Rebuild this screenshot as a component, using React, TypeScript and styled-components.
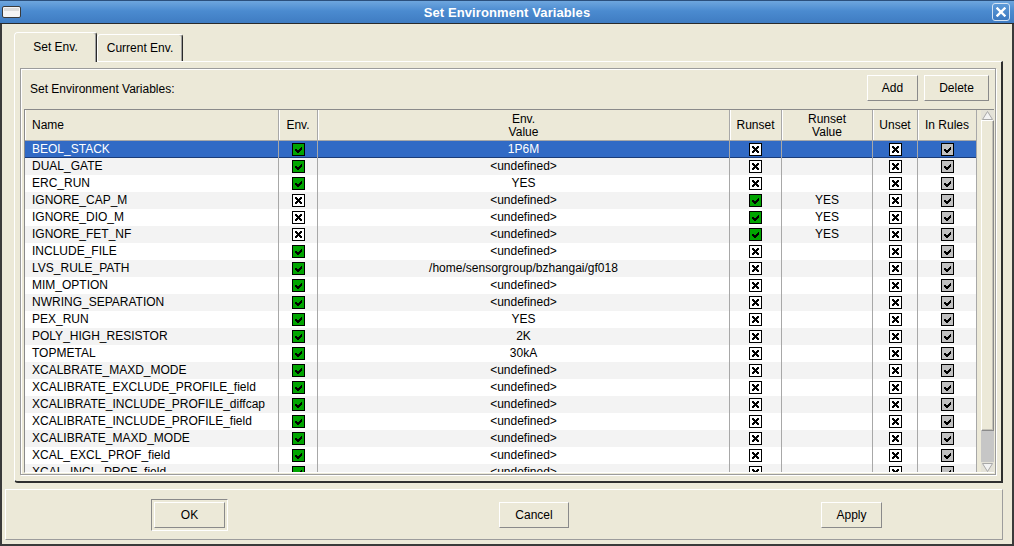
import React from 'react';
import styled, { createGlobalStyle } from 'styled-components';

const Global = createGlobalStyle`
  html, body { margin: 0; padding: 0; background: #ece9d8; }
  body { font-family: "Liberation Sans", Arial, sans-serif; font-size: 12px; color: #000; }
  * { box-sizing: border-box; }
`;

const BEIGE = '#ece9d8';

const Window = styled.div`
  width: 1014px;
  height: 546px;
  display: flex;
  flex-direction: column;
  background: ${BEIGE};
  overflow: hidden;
`;

const TitleBar = styled.div`
  height: 24px;
  display: grid;
  grid-template-columns: 1fr auto 1fr;
  align-items: center;
  background: linear-gradient(#6ea6de 0%, #4b8bd0 45%, #3f7cc2 100%);
  border-top: 1px solid #2b4f7c;
  border-bottom: 1px solid #2a2a2a;
  color: #fff;
`;

const TitleText = styled.div`
  font-weight: bold;
  font-size: 13px;
  letter-spacing: 0.1px;
`;

const TitleIcon = styled.svg`
  justify-self: start;
  margin-left: 2px;
  display: block;
`;

const CloseBtn = styled.div`
  justify-self: end;
  margin-right: 4px;
  width: 18px;
  height: 18px;
  border: 1px solid #d4e3f4;
  border-radius: 3px;
  background: linear-gradient(#5d9ad8, #3c79c0);
  display: flex;
  align-items: center;
  justify-content: center;
`;

const Frame = styled.div`
  flex: 1;
  display: flex;
  flex-direction: column;
  border-left: 2px solid #3a3a3a;
  border-right: 2px solid #3a3a3a;
  border-bottom: 2px solid #3a3a3a;
  padding: 8px 0 0 0;
`;

const TabBar = styled.div`
  display: flex;
  align-items: flex-end;
  height: 29px;
  margin-left: 12px;
  position: relative;
  z-index: 1;
`;

const Tab = styled.div<{ $active?: boolean; $w: number }>`
  width: ${p => p.$w}px;
  height: ${p => (p.$active ? 30 : 27)}px;
  margin-bottom: ${p => (p.$active ? -1 : 0)}px;
  background: ${BEIGE};
  border-top: 1px solid #fff;
  border-left: 1px solid #fff;
  border-right: 1px solid #2a2a2a;
  box-shadow: inset -1px 0 0 #a0a0a0;
  border-radius: 4px 3px 0 0;
  display: flex;
  align-items: center;
  justify-content: center;
  padding-bottom: ${p => (p.$active ? 1 : 0)}px;
  font-size: 12px;
`;

const Panel = styled.div`
  height: 422px;
  margin: 0 9px 0 12px;
  background: ${BEIGE};
  border-top: 1px solid #fff;
  border-left: 1px solid #fff;
  border-right: 2px solid #2e2e2e;
  border-bottom: 2px solid #2e2e2e;
  border-bottom-left-radius: 4px;
  padding: 6px 5px 7px 5px;
  display: flex;
  flex-direction: column;
`;

const Group = styled.div`
  flex: 1;
  border: 1px solid #9c9c9c;
  box-shadow: inset 1px 1px 0 #fff, 1px 1px 0 #fff;
  padding: 6px 1px 1px 3px;
  display: flex;
  flex-direction: column;
  gap: 8px;
`;

const GroupHeader = styled.div`
  display: flex;
  align-items: center;
  height: 26px;
  padding-right: 5px;
`;

const GroupLabel = styled.div`
  flex: 1;
  padding-left: 6px;
  padding-top: 1px;
`;

const Button = styled.button<{ $w: number; $ml?: number }>`
  width: ${p => p.$w}px;
  height: 26px;
  margin-left: ${p => p.$ml ?? 0}px;
  background: ${BEIGE};
  border-style: solid;
  border-width: 1px;
  border-color: #fff #8a8a8a #8a8a8a #fff;
  font-family: "Liberation Sans", Arial, sans-serif;
  font-size: 12px;
  color: #000;
  padding: 0;
`;

const DefaultFrame = styled.div<{ $ml?: number }>`
  margin-left: ${p => p.$ml ?? 0}px;
  padding: 2px;
  border-style: solid;
  border-width: 1px;
  border-color: #8a8a8a #fff #fff #8a8a8a;
  display: flex;
`;

const TableBox = styled.div`
  height: 364px;
  border-top: 1px solid #8a8a8a;
  border-left: 1px solid #8a8a8a;
  border-bottom: 1px solid #fff;
  display: flex;
  background: ${BEIGE};
`;

const Grid = styled.div`
  width: 952px;
  display: flex;
  flex-direction: column;
  overflow: hidden;
`;

const COLS = '254px 39px 412px 52px 91px 45px 59px';

const HeaderRow = styled.div`
  display: grid;
  grid-template-columns: ${COLS};
  height: 31px;
  flex: none;
`;

const HeaderCell = styled.div<{ $left?: boolean }>`
  background: ${BEIGE};
  border-right: 1px solid #a8a8a8;
  border-bottom: 1px solid #a8a8a8;
  box-shadow: inset 1px 0 0 #fff;
  display: flex;
  align-items: center;
  justify-content: ${p => (p.$left ? 'flex-start' : 'center')};
  text-align: center;
  padding-left: ${p => (p.$left ? 7 : 0)}px;
  padding-top: 1px;
  line-height: 13px;
`;

const Body = styled.div`
  flex: 1;
  overflow: hidden;
`;

const Row = styled.div<{ $bg: string; $sel?: boolean }>`
  display: grid;
  grid-template-columns: ${COLS};
  height: 17px;
  background: ${p => p.$bg};
  color: ${p => (p.$sel ? '#fff' : '#000')};
  box-shadow: ${p => (p.$sel ? 'inset 0 -1px 0 #1b3c78' : 'none')};
`;

const Cell = styled.div<{ $left?: boolean }>`
  border-right: 1px solid #a8a8a8;
  display: flex;
  align-items: center;
  justify-content: ${p => (p.$left ? 'flex-start' : 'center')};
  padding-left: ${p => (p.$left ? 7 : 0)}px;
  white-space: nowrap;
  overflow: hidden;
  line-height: 17px;
`;

const Filler = styled.div`
  flex: 1;
  background: ${BEIGE};
`;

const ScrollBar = styled.div`
  width: 13px;
  display: flex;
  flex-direction: column;
  background: #c8c8c8;
`;

const ScrollArrow = styled.div`
  height: 10px;
  background: #e4e2d8;
  display: flex;
  align-items: center;
  justify-content: center;
`;

const Thumb = styled.div`
  height: 311px;
  background: ${BEIGE};
  border-style: solid;
  border-width: 1px;
  border-color: #fff #8a8a8a #8a8a8a #fff;
  box-shadow: inset -1px -1px 0 #c4c2b8;
`;

const Track = styled.div`
  flex: 1;
  background: #c6c6c6;
`;

const ButtonBar = styled.div`
  height: 51px;
  margin: 6px 9px 0 3px;
  border-style: solid;
  border-width: 1px;
  border-color: #fff #9c9c9c #9c9c9c #fff;
  display: flex;
  align-items: center;
  padding-left: 145px;
`;

type Kind = 'c' | 'x' | 'g';

const Box: React.FC<{ kind: Kind }> = ({ kind }) => {
  const fill = kind === 'c' ? '#00a400' : kind === 'g' ? '#c0c0c0' : '#fff';
  return (
    <svg width="13" height="13" viewBox="0 0 13 13" shapeRendering="crispEdges" style={{ display: 'block' }}>
      <rect x="0.5" y="0.5" width="12" height="12" fill={fill} stroke="#000" strokeWidth="1" />
      {kind === 'x' ? (
        <g fill="#000">
          <rect x="3" y="3" width="2" height="2" />
          <rect x="8" y="3" width="2" height="2" />
          <rect x="4" y="4" width="2" height="2" />
          <rect x="7" y="4" width="2" height="2" />
          <rect x="5" y="5" width="3" height="3" />
          <rect x="4" y="7" width="2" height="2" />
          <rect x="7" y="7" width="2" height="2" />
          <rect x="3" y="8" width="2" height="2" />
          <rect x="8" y="8" width="2" height="2" />
        </g>
      ) : (
        <g fill="#000">
          <rect x="3" y="6" width="2" height="2" />
          <rect x="4" y="7" width="2" height="2" />
          <rect x="5" y="8" width="2" height="2" />
          <rect x="7" y="6" width="2" height="2" />
          <rect x="8" y="5" width="2" height="2" />
          <rect x="9" y="4" width="1" height="2" />
          <rect x="6" y="7" width="2" height="2" />
        </g>
      )}
    </svg>
  );
};

type RowData = { name: string; env: Kind; value: string; runset: Kind; rv: string };

const U = '<undefined>';
const rows: RowData[] = [
  { name: 'BEOL_STACK', env: 'c', value: '1P6M', runset: 'x', rv: '' },
  { name: 'DUAL_GATE', env: 'c', value: U, runset: 'x', rv: '' },
  { name: 'ERC_RUN', env: 'c', value: 'YES', runset: 'x', rv: '' },
  { name: 'IGNORE_CAP_M', env: 'x', value: U, runset: 'c', rv: 'YES' },
  { name: 'IGNORE_DIO_M', env: 'x', value: U, runset: 'c', rv: 'YES' },
  { name: 'IGNORE_FET_NF', env: 'x', value: U, runset: 'c', rv: 'YES' },
  { name: 'INCLUDE_FILE', env: 'c', value: U, runset: 'x', rv: '' },
  { name: 'LVS_RULE_PATH', env: 'c', value: '/home/sensorgroup/bzhangai/gf018', runset: 'x', rv: '' },
  { name: 'MIM_OPTION', env: 'c', value: U, runset: 'x', rv: '' },
  { name: 'NWRING_SEPARATION', env: 'c', value: U, runset: 'x', rv: '' },
  { name: 'PEX_RUN', env: 'c', value: 'YES', runset: 'x', rv: '' },
  { name: 'POLY_HIGH_RESISTOR', env: 'c', value: '2K', runset: 'x', rv: '' },
  { name: 'TOPMETAL', env: 'c', value: '30kA', runset: 'x', rv: '' },
  { name: 'XCALBRATE_MAXD_MODE', env: 'c', value: U, runset: 'x', rv: '' },
  { name: 'XCALIBRATE_EXCLUDE_PROFILE_field', env: 'c', value: U, runset: 'x', rv: '' },
  { name: 'XCALIBRATE_INCLUDE_PROFILE_diffcap', env: 'c', value: U, runset: 'x', rv: '' },
  { name: 'XCALIBRATE_INCLUDE_PROFILE_field', env: 'c', value: U, runset: 'x', rv: '' },
  { name: 'XCALIBRATE_MAXD_MODE', env: 'c', value: U, runset: 'x', rv: '' },
  { name: 'XCAL_EXCL_PROF_field', env: 'c', value: U, runset: 'x', rv: '' },
  { name: 'XCAL_INCL_PROF_field', env: 'c', value: U, runset: 'x', rv: '' },
];

const Arrow: React.FC<{ up?: boolean }> = ({ up }) => (
  <svg width="11" height="9" viewBox="0 0 11 9" style={{ display: 'block' }}>
    <polygon
      points={up ? '5.5,0.5 10.5,8.5 0.5,8.5' : '0.5,0.5 10.5,0.5 5.5,8.5'}
      fill="#f2f2f2"
      stroke="#a8a8a8"
      strokeWidth="1"
    />
  </svg>
);

export default function App() {
  return (
    <Window>
      <Global />
      <TitleBar>
        <TitleIcon width="19" height="12" viewBox="0 0 19 12">
          <rect x="0.5" y="0.5" width="18" height="11" rx="1.5" fill="#f4f4f4" stroke="#3a3a3a" />
          <rect x="2" y="2" width="15" height="3" fill="#dcdcdc" />
        </TitleIcon>
        <TitleText>Set Environment Variables</TitleText>
        <CloseBtn>
          <svg width="10" height="10" viewBox="0 0 10 10">
            <path d="M1.5 1.5 L8.5 8.5 M8.5 1.5 L1.5 8.5" stroke="#fff" strokeWidth="2.4" strokeLinecap="square" />
          </svg>
        </CloseBtn>
      </TitleBar>
      <Frame>
        <TabBar>
          <Tab $active $w={83}>Set Env.</Tab>
          <Tab $w={86}>Current Env.</Tab>
        </TabBar>
        <Panel>
          <Group>
            <GroupHeader>
              <GroupLabel>Set Environment Variables:</GroupLabel>
              <Button $w={51}>Add</Button>
              <Button $w={65} $ml={6}>Delete</Button>
            </GroupHeader>
            <TableBox>
              <Grid>
                <HeaderRow>
                  <HeaderCell $left>Name</HeaderCell>
                  <HeaderCell>Env.</HeaderCell>
                  <HeaderCell>Env.<br />Value</HeaderCell>
                  <HeaderCell>Runset</HeaderCell>
                  <HeaderCell>Runset<br />Value</HeaderCell>
                  <HeaderCell>Unset</HeaderCell>
                  <HeaderCell>In Rules</HeaderCell>
                </HeaderRow>
                <Body>
                  {rows.map((r, i) => {
                    const sel = i === 0;
                    const bg = sel ? '#316ac5' : i % 2 === 1 ? '#f3f3f3' : '#ffffff';
                    return (
                      <Row key={i} $bg={bg} $sel={sel}>
                        <Cell $left>{r.name}</Cell>
                        <Cell><Box kind={r.env} /></Cell>
                        <Cell>{r.value}</Cell>
                        <Cell><Box kind={r.runset} /></Cell>
                        <Cell>{r.rv}</Cell>
                        <Cell><Box kind="x" /></Cell>
                        <Cell><Box kind="g" /></Cell>
                      </Row>
                    );
                  })}
                </Body>
              </Grid>
              <Filler />
              <ScrollBar>
                <ScrollArrow><Arrow up /></ScrollArrow>
                <Thumb />
                <Track />
                <ScrollArrow><Arrow /></ScrollArrow>
              </ScrollBar>
            </TableBox>
          </Group>
        </Panel>
        <ButtonBar>
          <DefaultFrame>
            <Button $w={71}>OK</Button>
          </DefaultFrame>
          <Button $w={70} $ml={271}>Cancel</Button>
          <Button $w={61} $ml={252}>Apply</Button>
        </ButtonBar>
      </Frame>
    </Window>
  );
}
